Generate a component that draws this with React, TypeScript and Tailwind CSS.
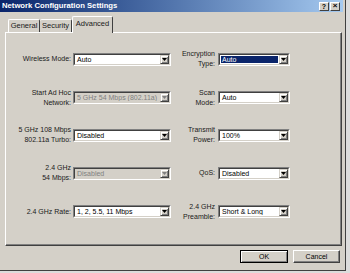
import React from 'react';

const FONT = { fontFamily: '"Liberation Sans", Arial, sans-serif' };

interface SelectProps {
  value: string;
  wide?: boolean;
  disabled?: boolean;
  active?: boolean;
}

function Select({ value, wide = false, disabled = false, active = false }: SelectProps) {
  return (
    <div
      className={`flex h-[13px] ${wide ? 'w-[98px]' : 'w-[72px]'} border border-t-[#808080] border-l-[#808080] border-b-white border-r-white`}
    >
      <div
        className={`flex flex-1 min-w-0 border border-t-[#404040] border-l-[#404040] border-b-[#d4d0c8] border-r-[#d4d0c8] ${disabled ? 'bg-[#d4d0c8]' : 'bg-white'}`}
      >
        <div className="flex flex-1 min-w-0 p-px">
          <div
            className={`flex flex-1 min-w-0 items-center pl-[1px] text-[7px] leading-none whitespace-nowrap overflow-hidden ${
              active ? 'bg-[#0a246a] text-white' : disabled ? 'text-[#808080]' : 'text-black'
            }`}
          >
            {value}
          </div>
        </div>
        <div className="flex w-[9px] items-center justify-center border border-t-[#d4d0c8] border-l-[#d4d0c8] border-b-[#404040] border-r-[#404040] bg-[#d4d0c8] shadow-[inset_1px_1px_0_#fff,inset_-1px_-1px_0_#808080]">
          <svg width="5" height="3" viewBox="0 0 5 3">
            <path d="M0 0h5L2.5 3z" fill={disabled ? '#808080' : '#000'} />
          </svg>
        </div>
      </div>
    </div>
  );
}

function Label({ lines, w }: { lines: string[]; w: string }) {
  return (
    <div className={`${w} text-right text-[7px] leading-[10px] text-[#1a1a1a]`}>
      {lines.map((l) => (
        <div key={l}>{l}</div>
      ))}
    </div>
  );
}

interface Row {
  h: string;
  left: string[];
  leftValue: string;
  leftDisabled?: boolean;
  right: string[];
  rightValue: string;
  rightActive?: boolean;
}

const rows: Row[] = [
  { h: 'h-[40px]', left: ['Wireless Mode:'], leftValue: 'Auto', right: ['Encryption', 'Type:'], rightValue: 'Auto', rightActive: true },
  { h: 'h-[37px]', left: ['Start Ad Hoc', 'Network:'], leftValue: '5  GHz 54 Mbps (802.11a)', leftDisabled: true, right: ['Scan', 'Mode:'], rightValue: 'Auto' },
  { h: 'h-[38px]', left: ['5 GHz 108 Mbps', '802.11a Turbo:'], leftValue: 'Disabled', right: ['Transmit', 'Power:'], rightValue: '100%' },
  { h: 'h-[38px]', left: ['2.4 GHz', '54 Mbps:'], leftValue: 'Disabled', leftDisabled: true, right: ['QoS:'], rightValue: 'Disabled' },
  { h: 'h-[39px]', left: ['2.4 GHz Rate:'], leftValue: '1, 2, 5.5, 11 Mbps', right: ['2.4 GHz', 'Preamble:'], rightValue: 'Short & Long' },
];

export default function App() {
  return (
    <div className="w-[350px] h-[273px] bg-[#dcdcdc] overflow-hidden" style={FONT}>
      <div className="flex flex-col w-[346px] h-[271px] bg-[#d4d0c8] border-r border-b border-[#404040]">
        {/* Title bar */}
        <div className="flex h-[12px] w-[343px] items-center justify-between pl-[2px] pr-[3px] bg-gradient-to-r from-[#0a246a] to-[#a6caf0]">
          <span className="text-[7.7px] font-bold leading-none text-white whitespace-nowrap">
            Network Configuration Settings
          </span>
          <div className="flex gap-[1px]">
            <div className="flex h-[9px] w-[10px] items-center justify-center bg-[#d4d0c8] border border-t-white border-l-white border-b-[#404040] border-r-[#404040] text-[7px] font-bold leading-none text-black">
              ?
            </div>
            <div className="flex h-[9px] w-[10px] items-center justify-center bg-[#d4d0c8] border border-t-white border-l-white border-b-[#404040] border-r-[#404040] text-[8px] font-bold leading-none text-black">
              ×
            </div>
          </div>
        </div>

        {/* Tabs */}
        <div className="flex items-end h-[16px] mt-[4px] pl-[8px]">
          <div className="flex h-[13px] w-[32px] items-center justify-center border-t border-l border-r border-t-white border-l-white border-r-[#404040] rounded-t-[2px] text-[7.5px] leading-none text-[#1a1a1a]">
            General
          </div>
          <div className="flex h-[13px] w-[32px] items-center justify-center border-t border-r border-t-white border-r-[#404040] rounded-t-[2px] text-[7.5px] leading-none text-[#1a1a1a]">
            Security
          </div>
          <div className="relative z-10 -mb-px flex h-[17px] w-[41px] items-center justify-center bg-[#d4d0c8] border-t border-l border-r border-t-white border-l-white border-r-[#404040] rounded-t-[2px] text-[7.5px] leading-none text-[#1a1a1a] pb-[2px]">
            Advanced
          </div>
        </div>

        {/* Panel */}
        <div className="ml-[5px] w-[337px] h-[214px] border border-t-white border-l-white border-b-[#404040] border-r-[#404040] shadow-[inset_-1px_-1px_0_#808080] pt-[6px]">
          {rows.map((r) => (
            <div key={r.leftValue + r.rightValue} className={`flex items-center ${r.h}`}>
              <Label lines={r.left} w="w-[65px]" />
              <div className="ml-[2px]">
                <Select value={r.leftValue} wide disabled={r.leftDisabled} />
              </div>
              <Label lines={r.right} w="w-[44px]" />
              <div className="ml-[3px]">
                <Select value={r.rightValue} active={r.rightActive} />
              </div>
            </div>
          ))}
        </div>

        {/* Buttons */}
        <div className="flex justify-end gap-[5px] mt-[4px] pr-[5px]">
          <div className="flex h-[13px] w-[48px] items-center justify-center bg-[#d4d0c8] border border-black shadow-[inset_1px_1px_0_#fff,inset_-1px_-1px_0_#808080] text-[7px] leading-none text-black">
            OK
          </div>
          <div className="flex h-[13px] w-[47px] items-center justify-center bg-[#d4d0c8] border border-t-white border-l-white border-b-[#404040] border-r-[#404040] shadow-[inset_-1px_-1px_0_#808080] text-[7px] leading-none text-black">
            Cancel
          </div>
        </div>
      </div>
    </div>
  );
}
